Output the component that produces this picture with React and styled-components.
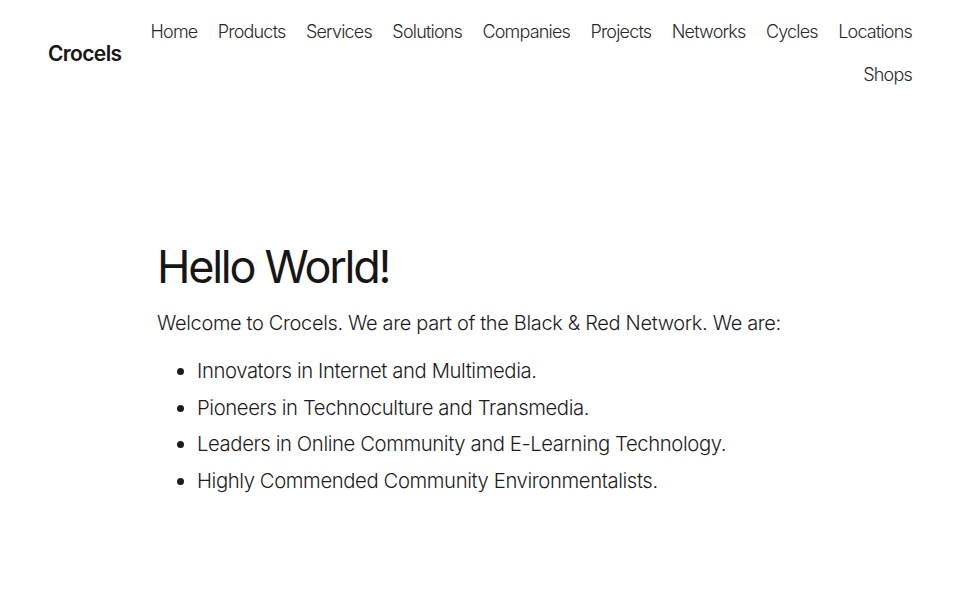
import React from "react";
import styled, { createGlobalStyle } from "styled-components";

const Global = createGlobalStyle`
  html, body { margin: 0; padding: 0; background: #fff; }
  body { font-family: Inter, "Noto Sans", sans-serif; color: #1c1c1c; }
`;

const Header = styled.header`
  display: flex;
  align-items: center;
  padding: 10px 48px 10px 48px;
  gap: 28px;
`;

const Logo = styled.a`
  font-size: 21px;
  font-weight: 600;
  letter-spacing: -0.03em;
  color: #161616;
  text-decoration: none;
  flex-shrink: 0;
`;

const Nav = styled.nav`
  flex: 1;
  display: flex;
  flex-wrap: wrap;
  justify-content: flex-end;
  column-gap: 20.4px;
`;

const NavLink = styled.a`
  font-size: 18px;
  font-weight: 300;
  letter-spacing: -0.045em;
  line-height: 43px;
  color: #2a2a2a;
  text-decoration: none;
`;

const Main = styled.main`
  padding: 133px 157px 0 157px;
`;

const Title = styled.h1`
  margin: 0 0 13px 0;
  font-size: 45px;
  font-weight: 400;
  letter-spacing: -0.05em;
  line-height: 56px;
  color: #161616;
`;

const Lead = styled.p`
  margin: 0 0 15px 0;
  font-size: 20px;
  font-weight: 300;
  letter-spacing: -0.017em;
  line-height: 30px;
`;

const List = styled.ul`
  margin: 0;
  padding-left: 40px;
`;

const Item = styled.li`
  font-size: 20.3px;
  font-weight: 300;
  letter-spacing: -0.02em;
  line-height: 36.7px;
`;

const links = ["Home", "Products", "Services", "Solutions", "Companies", "Projects", "Networks", "Cycles", "Locations", "Shops"];
const items = [
  "Innovators in Internet and Multimedia.",
  "Pioneers in Technoculture and Transmedia.",
  "Leaders in Online Community and E-Learning Technology.",
  "Highly Commended Community Environmentalists.",
];

export default function App() {
  return (
    <>
      <Global />
      <Header>
        <Logo href="#">Crocels</Logo>
        <Nav>
          {links.map((l) => (
            <NavLink key={l} href="#">{l}</NavLink>
          ))}
        </Nav>
      </Header>
      <Main>
        <Title>Hello World!</Title>
        <Lead>Welcome to Crocels. We are part of the Black &amp; Red Network. We are:</Lead>
        <List>
          {items.map((i) => (
            <Item key={i}>{i}</Item>
          ))}
        </List>
      </Main>
    </>
  );
}
